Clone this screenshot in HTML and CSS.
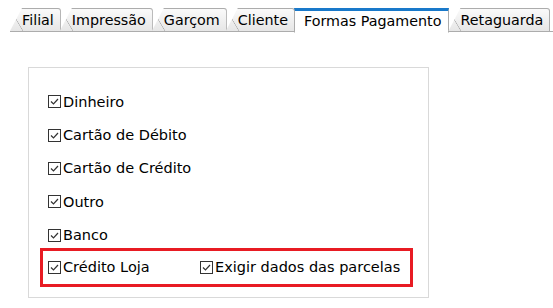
FILE: index.html
```html
<!DOCTYPE html>
<html>
<head>
<meta charset="utf-8">
<link rel="stylesheet" href="styles.css">
</head>
<body>
<div class="tabs">
  <div class="tab first">Filial</div>
  <div class="tab">Impressão</div>
  <div class="tab">Garçom</div>
  <div class="tab">Cliente</div>
  <div class="tab active">Formas Pagamento</div>
  <div class="tab">Retaguarda</div>
  <div class="rest"></div>
</div>
<div class="content">
  <div class="group">
    <label class="item"><span class="cb"><svg viewBox="0 0 13 13" width="13" height="13"><rect x="0.5" y="0.5" width="12" height="12" fill="#fff" stroke="#333"/><path d="M3 6.5 L5.5 9 L10 4" fill="none" stroke="#333" stroke-width="1.2"/></svg></span>Dinheiro</label>
    <label class="item"><span class="cb"><svg viewBox="0 0 13 13" width="13" height="13"><rect x="0.5" y="0.5" width="12" height="12" fill="#fff" stroke="#333"/><path d="M3 6.5 L5.5 9 L10 4" fill="none" stroke="#333" stroke-width="1.2"/></svg></span>Cartão de Débito</label>
    <label class="item"><span class="cb"><svg viewBox="0 0 13 13" width="13" height="13"><rect x="0.5" y="0.5" width="12" height="12" fill="#fff" stroke="#333"/><path d="M3 6.5 L5.5 9 L10 4" fill="none" stroke="#333" stroke-width="1.2"/></svg></span>Cartão de Crédito</label>
    <label class="item"><span class="cb"><svg viewBox="0 0 13 13" width="13" height="13"><rect x="0.5" y="0.5" width="12" height="12" fill="#fff" stroke="#333"/><path d="M3 6.5 L5.5 9 L10 4" fill="none" stroke="#333" stroke-width="1.2"/></svg></span>Outro</label>
    <label class="item"><span class="cb"><svg viewBox="0 0 13 13" width="13" height="13"><rect x="0.5" y="0.5" width="12" height="12" fill="#fff" stroke="#333"/><path d="M3 6.5 L5.5 9 L10 4" fill="none" stroke="#333" stroke-width="1.2"/></svg></span>Banco</label>
    <div class="highlight">
      <label class="item loja"><span class="cb"><svg viewBox="0 0 13 13" width="13" height="13"><rect x="0.5" y="0.5" width="12" height="12" fill="#fff" stroke="#333"/><path d="M3 6.5 L5.5 9 L10 4" fill="none" stroke="#333" stroke-width="1.2"/></svg></span>Crédito Loja</label>
      <label class="item"><span class="cb"><svg viewBox="0 0 13 13" width="13" height="13"><rect x="0.5" y="0.5" width="12" height="12" fill="#fff" stroke="#333"/><path d="M3 6.5 L5.5 9 L10 4" fill="none" stroke="#333" stroke-width="1.2"/></svg></span>Exigir dados das parcelas</label>
    </div>
  </div>
</div>
</body>
</html>
```
FILE: styles.css
```css
html, body { margin: 0; padding: 0; background: #fff; }
body {
  width: 553px; height: 308px; overflow: hidden;
  font-family: "DejaVu Sans", "Liberation Sans", sans-serif;
  font-size: 14px; color: #000;
}
.tabs {
  display: flex; align-items: flex-end;
  height: 32px; box-sizing: border-box; padding-top: 7px;
}
.tab {
  height: 24px; box-sizing: border-box;
  border: 1px solid #acacac;
  background: linear-gradient(#fafafa, #e6e6e6);
  padding: 0 6px 0 12px; margin-left: -1px;
  display: flex; align-items: center;
  clip-path: polygon(12px 0, 100% 0, 100% 100%, 0 100%, 0 calc(100% - 1px));
  font-size: 14.3px; line-height: 1;
  border-top-right-radius: 3px;
  border-left: none;
  position: relative;
}
.tab::before {
  content: ""; position: absolute; left: 0; top: 0; bottom: 0; width: 13px;
  background: linear-gradient(to top right, transparent calc(50% - 0.6px), #acacac 50%, transparent calc(50% + 0.6px));
}
.tab.first { margin-left: 10px; }
.tab.active {
  background: #fff; border-color: #acacac; border-bottom-color: #fff;
  border-top: 3px solid #1979ca; height: 25px; margin-bottom: -1px;
  clip-path: none; padding: 0 7px 0 9px; border-radius: 0; border-left: 1px solid #acacac;
}
.tab.active::before { display: none; }
.rest { flex: 1; border-bottom: 1px solid #acacac; align-self: flex-end; }
.content { padding: 35px 0 0 28px; }
.group {
  width: 401px; height: 231px; box-sizing: border-box;
  border: 1px solid #d9d9d9;
  padding: 17px 0 0 19px;
  display: flex; flex-direction: column;
}
.item {
  display: flex; align-items: center; height: 33.4px; flex: none;
  font-size: 14.5px; white-space: nowrap;
}
.cb { display: inline-flex; width: 14px; margin-right: 1px; }
.cb svg { display: block; }
.highlight {
  display: flex; margin-left: -8px; margin-top: -4px; flex: none;
  width: 373px; height: 39px; box-sizing: border-box;
  border: 3px solid #e81b23; padding-left: 5px;
}
.highlight .item { height: 33px; }
.loja { width: 152px; }
```
